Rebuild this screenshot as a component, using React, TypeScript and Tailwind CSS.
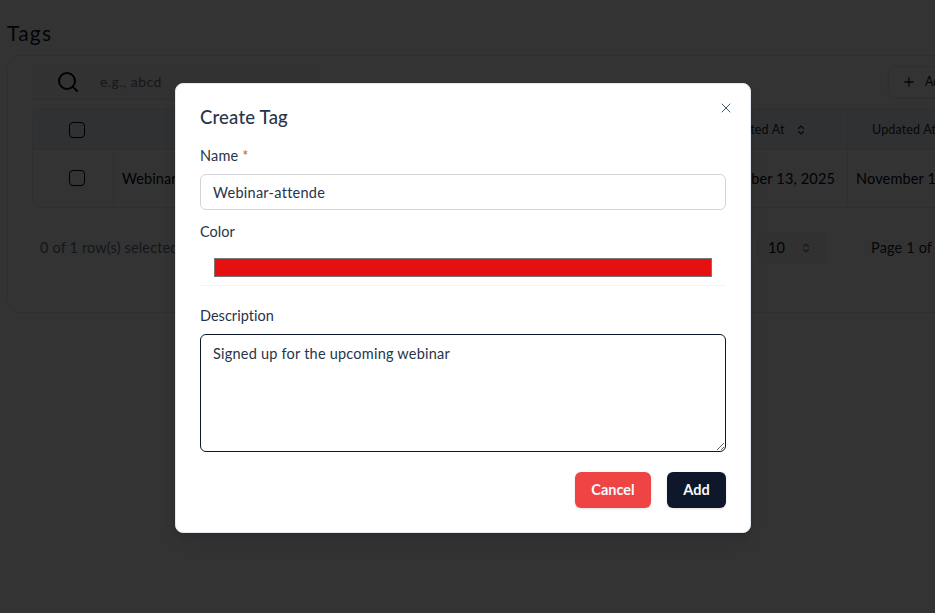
import { useState } from "react";
import { ChevronsUpDown, Plus, Search, X } from "lucide-react";

function Checkbox() {
  return (
    <button
      role="checkbox"
      aria-checked={false}
      className="block size-4 rounded-[4px] border border-slate-950 shadow-sm"
    />
  );
}

function TagsPage() {
  return (
    <main className="w-[1240px] pt-5 pl-[7px]">
      <h1 className="h-[26px] text-[21px] leading-[26px] tracking-[1.2px] text-[#0f172a]">Tags</h1>
      <section className="mt-[9px] h-[258px] rounded-xl border border-slate-200 px-6 pt-2">
        <div className="flex h-9 justify-between">
          <div className="flex h-9 w-[288px] items-center border-b border-gray-200 bg-gray-50 pl-6">
            <Search size={24} strokeWidth={2} className="text-slate-950" />
            <span className="ml-5 text-[14px] tracking-[0.45px] text-gray-500">e.g., abcd</span>
          </div>
          <button className="mr-[209px] mt-[2px] flex h-8 w-[118px] items-center rounded-md border border-slate-200 pl-[13px] text-[12.5px] text-slate-900 shadow-sm">
            <Plus size={14} strokeWidth={2.2} className="mr-[9px]" />
            Add Tag
          </button>
        </div>

        <div className="mt-2 h-[100px] overflow-hidden rounded-md border border-slate-200">
          <div className="flex h-[41px] border-b border-slate-200 bg-slate-100 text-[12.5px] text-slate-800">
            <div className="flex w-[81px] shrink-0 items-center justify-center border-r border-slate-200 pt-[2px] pr-[10px] pl-[17px]">
              <Checkbox />
            </div>
            <div className="w-[550px] shrink-0" />
            <div className="flex w-[184px] shrink-0 items-center border-r border-slate-200 pt-[2px] pl-[60px]">
              <span className="w-[56px] pt-px whitespace-nowrap tracking-[0.2px]">Created At</span>
              <ChevronsUpDown size={12} strokeWidth={2.2} className="ml-[15px]" />
            </div>
            <div className="flex items-center pt-[3px] pl-6 tracking-[0.15px]">Updated At</div>
          </div>
          <div className="flex h-[57px] items-center text-[14.5px] text-slate-950">
            <div className="flex h-[57px] w-[81px] shrink-0 items-center justify-center border-r border-slate-200 pr-[10px] pb-px pl-[17px]">
              <Checkbox />
            </div>
            <div className="w-[550px] shrink-0 pl-2 tracking-[0.1px]">Webinar-attende</div>
            <div className="flex h-[57px] w-[184px] shrink-0 items-center justify-end border-r border-slate-200 pr-3 tracking-[0.15px]">
              November 13, 2025
            </div>
            <div className="pl-2 tracking-[0.15px]">November 13, 2025</div>
          </div>
        </div>

        <div className="mt-6 flex h-8 items-center text-[14.5px]">
          <span className="w-[724px] pl-2 tracking-[0.15px] text-slate-500">0 of 1 row(s) selected.</span>
          <div className="flex h-8 w-[70px] items-center justify-between rounded-md bg-gray-100 pr-[14px] pl-3 text-slate-950">
            <span className="tracking-[0.2px]">10</span>
            <ChevronsUpDown size={12} strokeWidth={2.2} className="text-slate-500" />
          </div>
          <span className="ml-[45px] tracking-[0.15px] text-slate-900">Page 1 of 1</span>
        </div>
      </section>
    </main>
  );
}

interface CreateTagDialogProps {
  defaultColor: string;
}

function CreateTagDialog({ defaultColor }: CreateTagDialogProps) {
  const [name, setName] = useState("Webinar-attende");
  const [color, setColor] = useState(defaultColor);
  const [description, setDescription] = useState("Signed up for the upcoming webinar");

  return (
    <div
      role="dialog"
      className="relative h-[450px] w-[576px] rounded-lg border border-slate-200 bg-white px-6 pt-6 text-[#27344a] shadow-lg"
    >
      <h2 className="h-[19px] text-[18.5px] leading-[18px] font-medium tracking-[0.2px]">Create Tag</h2>
      <button aria-label="Close" className="absolute top-4 right-4 text-slate-600">
        <X size={16} strokeWidth={1.5} />
      </button>

      <label className="mt-[19px] block h-5 text-[14.5px] leading-5 tracking-[0.2px]">
        Name <span className="text-[#ef4444]">*</span>
      </label>
      <input
        value={name}
        onChange={(e) => setName(e.target.value)}
        className="mt-[8px] block h-9 w-full rounded-md border border-zinc-300 px-3 pt-1 pb-[3px] text-[14.5px] tracking-[0.27px] outline-none"
      />

      <label className="mt-[12px] block h-5 text-[14.5px] leading-5">Color</label>
      <input
        type="color"
        value={color}
        onChange={(e) => setColor(e.target.value)}
        className="mt-[8px] block h-9 w-full border-b border-gray-100 px-3 py-1"
      />

      <label className="mt-[20px] block h-5 text-[14.5px] leading-5 tracking-[0.02px]">Description</label>
      <textarea
        value={description}
        onChange={(e) => setDescription(e.target.value)}
        className="mt-[8px] block h-[118px] w-full resize rounded-md border border-[#0f172a] px-3 pt-[9px] pb-2 text-[14.5px] leading-5 tracking-[0.22px] outline-none"
      />

      <div className="mt-5 flex justify-end gap-4 text-[14.5px] font-bold text-slate-50">
        <button className="h-9 w-[76px] rounded-md bg-[#ef4444] shadow-sm">Cancel</button>
        <button className="h-9 w-[59px] rounded-md bg-[#0f172a] shadow-sm">Add</button>
      </div>
    </div>
  );
}

export default function App() {
  return (
    <div className="relative h-[613px] w-[935px] overflow-hidden bg-white font-['Lato','Noto_Sans',sans-serif]">
      <TagsPage />
      <div className="absolute inset-0 flex justify-center bg-black/80 pt-[83px] pr-[9px]">
        <CreateTagDialog defaultColor="#e61010" />
      </div>
    </div>
  );
}
